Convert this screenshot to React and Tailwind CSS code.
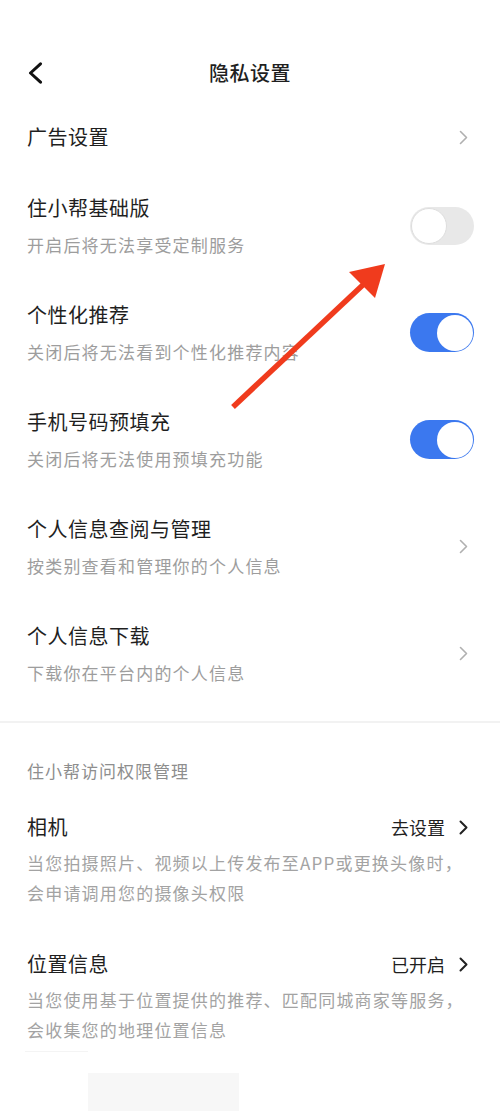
import React from "react";

const font = { fontFamily: '"Noto Sans CJK SC", "Noto Sans", sans-serif' };

function Chevron({ color = "#b0b0b0", w = 1.6 }) {
  return (
    <svg width="9" height="15" viewBox="0 0 9 15" fill="none">
      <path d="M1.5 1.5 L7.5 7.5 L1.5 13.5" stroke={color} strokeWidth={w} strokeLinecap="round" strokeLinejoin="round" />
    </svg>
  );
}

function Toggle({ on }) {
  return on ? (
    <div className="w-[64px] h-[39px] rounded-full bg-[#3b78ef] flex items-center justify-end pr-[1.5px]">
      <div className="w-[36px] h-[36px] rounded-full bg-white" />
    </div>
  ) : (
    <div className="w-[64px] h-[38px] rounded-full bg-[#e8e8e8] flex items-center pl-[1px]">
      <div className="w-[36px] h-[36px] rounded-full bg-white border border-[#dedede]" />
    </div>
  );
}

function Row({ title, sub, right, pr = "pr-[32px]" }) {
  return (
    <div className={`h-[107px] flex items-center justify-between pl-[27px] ${pr}`}>
      <div className="flex flex-col">
        <div className="text-[20px] leading-[28px] tracking-[0.5px] text-[#1f1f1f]">{title}</div>
        <div className="mt-[10px] text-[17px] leading-[26px] tracking-[1.2px] text-[#9d9d9d]">{sub}</div>
      </div>
      {right}
    </div>
  );
}

export default function App() {
  return (
    <div className="relative w-[500px] min-h-[1111px] h-[1111px] overflow-hidden bg-white" style={font}>
      <div className="h-[44px]" />
      <div className="h-[58px] grid grid-cols-[1fr_auto_1fr] items-center">
        <div className="pl-[27px] flex items-center">
          <svg width="16" height="22" viewBox="0 0 16 22" fill="none">
            <path d="M13.5 1.8 L3.5 11 L13.5 20.2" stroke="#111" strokeWidth="3" strokeLinecap="round" strokeLinejoin="round" />
          </svg>
        </div>
        <div className="text-[20px] leading-[28px] font-medium tracking-[0.5px] text-[#1f1f1f]">隐私设置</div>
        <div />
      </div>

      <div className="h-[70px] flex items-center justify-between pl-[27px] pr-[32px]">
        <div className="text-[20px] leading-[28px] tracking-[0.5px] text-[#1f1f1f]">广告设置</div>
        <Chevron />
      </div>

      <Row title="住小帮基础版" sub="开启后将无法享受定制服务" right={<Toggle on={false} />} pr="pr-[26px]" />
      <Row title="个性化推荐" sub="关闭后将无法看到个性化推荐内容" right={<Toggle on />} pr="pr-[26px]" />
      <Row title="手机号码预填充" sub="关闭后将无法使用预填充功能" right={<Toggle on />} pr="pr-[26px]" />
      <Row title="个人信息查阅与管理" sub="按类别查看和管理你的个人信息" right={<Chevron />} />
      <Row title="个人信息下载" sub="下载你在平台内的个人信息" right={<Chevron />} />

      <div className="mt-[14px] h-[2px] bg-[#f2f2f2]" />

      <div className="pl-[27px] pt-[35px] text-[17px] leading-[26px] tracking-[1px] text-[#8e8e8e]">住小帮访问权限管理</div>

      <div className="pl-[27px] pr-[32px] pt-[29px]">
        <div className="flex items-center justify-between">
          <div className="text-[20px] leading-[28px] tracking-[0.5px] text-[#1f1f1f]">相机</div>
          <div className="flex items-center gap-[14px]">
            <span className="text-[18px] leading-[28px] text-[#1f1f1f]">去设置</span>
            <Chevron color="#222" w={2} />
          </div>
        </div>
        <div className="mt-[7px] text-[17px] leading-[30px] tracking-[1.2px] text-[#a3a3a3] whitespace-nowrap">
          <div>当您拍摄照片、视频以上传发布至APP或更换头像时，</div>
          <div>会申请调用您的摄像头权限</div>
        </div>
      </div>

      <div className="pl-[27px] pr-[32px] pt-[42px]">
        <div className="flex items-center justify-between">
          <div className="text-[20px] leading-[28px] tracking-[0.5px] text-[#1f1f1f]">位置信息</div>
          <div className="flex items-center gap-[14px]">
            <span className="text-[18px] leading-[28px] text-[#1f1f1f]">已开启</span>
            <Chevron color="#222" w={2} />
          </div>
        </div>
        <div className="mt-[7px] text-[17px] leading-[30px] tracking-[1.2px] text-[#a3a3a3] whitespace-nowrap">
          <div>当您使用基于位置提供的推荐、匹配同城商家等服务，</div>
          <div>会收集您的地理位置信息</div>
        </div>
      </div>

      <div className="ml-[25px] w-[63px] h-px bg-[#f4f4f4] mt-[6px]" />
      <div className="ml-[88px] w-[151px] h-[40px] bg-[#f7f7f7] mt-[21px]" />

      <svg className="absolute left-0 top-0 pointer-events-none" width="500" height="1111" viewBox="0 0 500 1111">
        <line x1="233" y1="407" x2="366" y2="282" stroke="#f03b1d" strokeWidth="5.5" />
        <polygon points="385,264 349,272 375,298" fill="#f03b1d" />
      </svg>
    </div>
  );
}
